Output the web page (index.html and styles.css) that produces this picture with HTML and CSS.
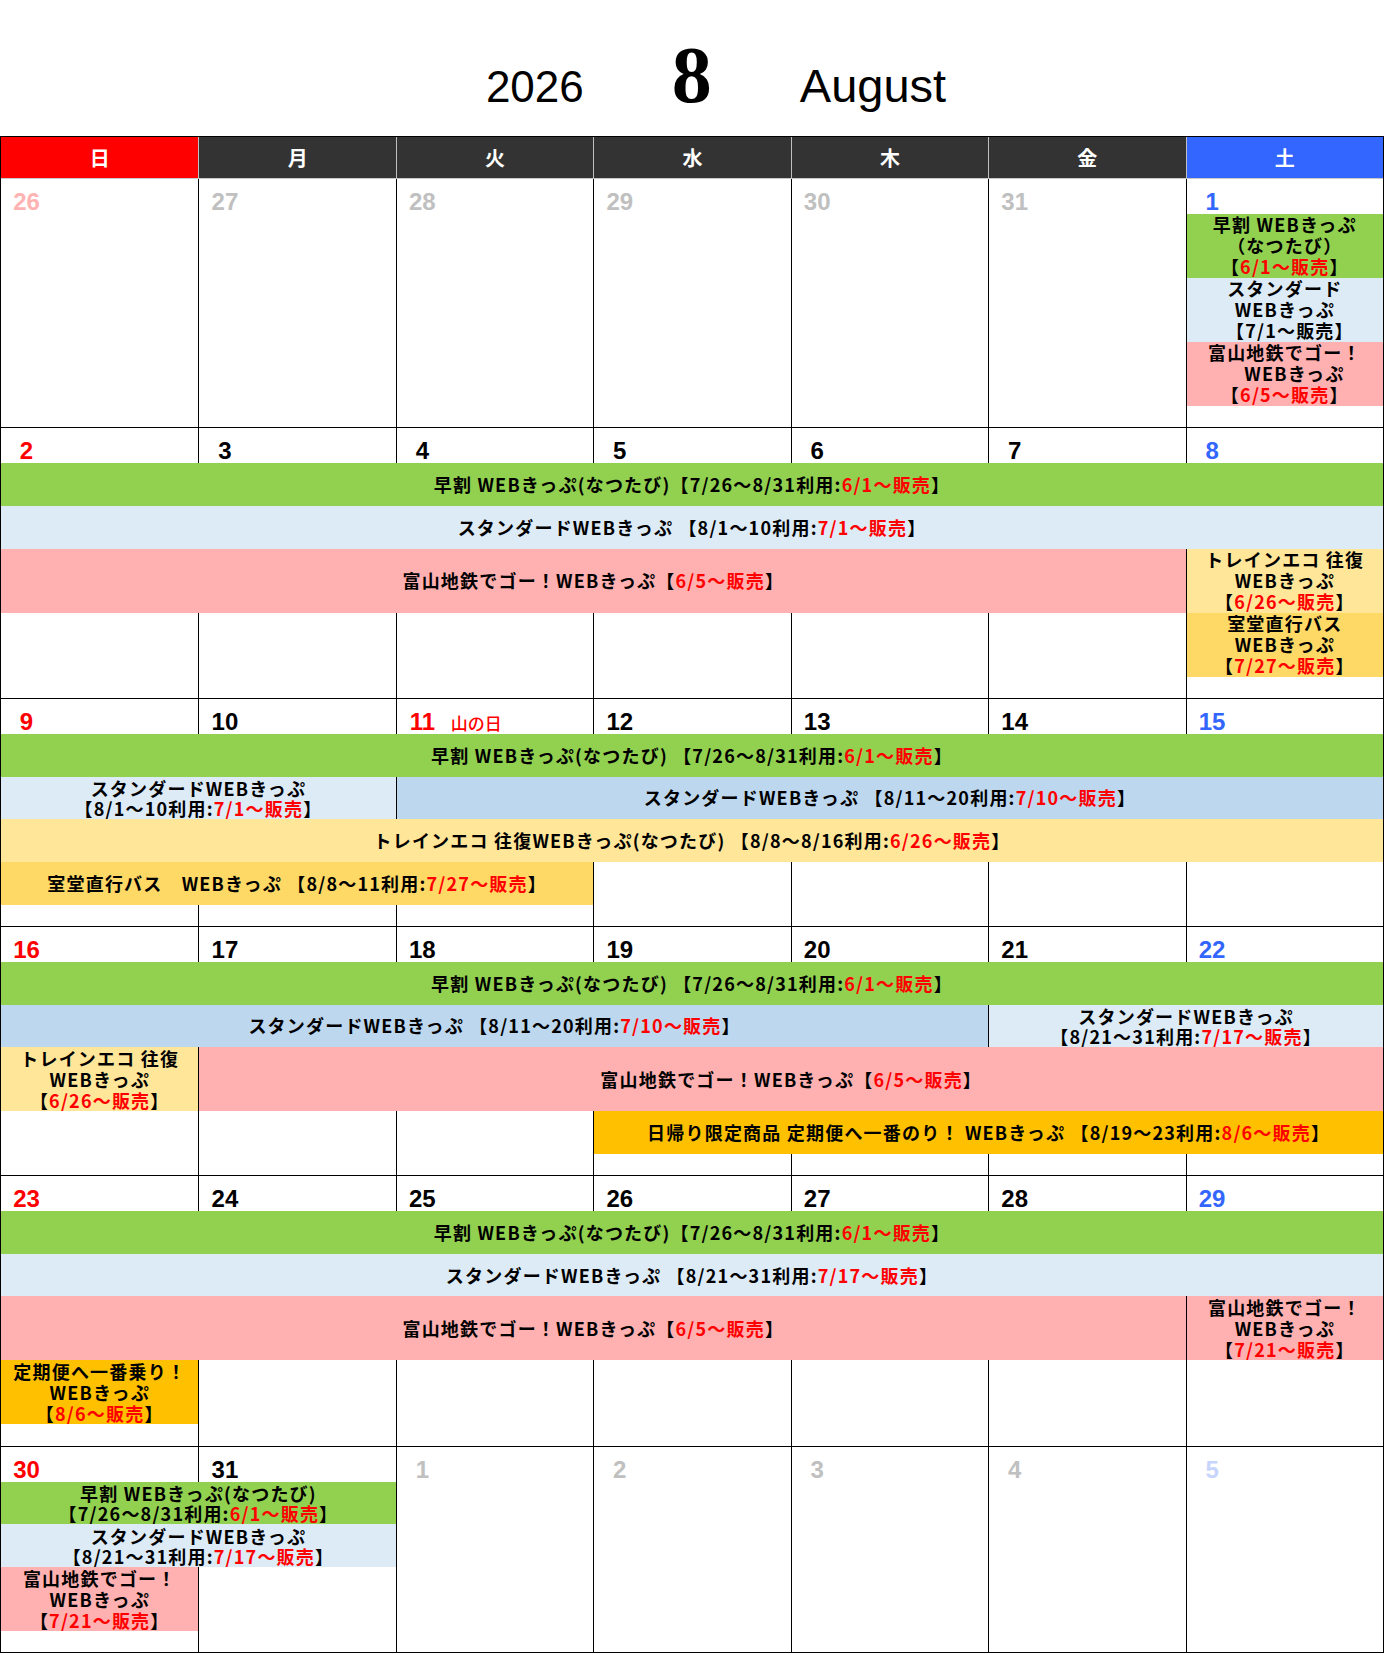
FILE: index.html
```html
<!DOCTYPE html>
<html lang="ja">
<head>
<meta charset="utf-8">
<title>2026年8月 カレンダー</title>
<link rel="stylesheet" href="styles.css">
</head>
<body>
<header class="title">
  <span class="year">2026</span>
  <span class="month">8</span>
  <span class="month-en">August</span>
</header>

<div class="cal">
  <div class="head">
    <div class="hd sun">日</div>
    <div class="hd">月</div>
    <div class="hd">火</div>
    <div class="hd">水</div>
    <div class="hd">木</div>
    <div class="hd">金</div>
    <div class="hd sat">土</div>
  </div>

  <!-- week 1 -->
  <div class="week u10">
    <div class="day c1"><span class="num prev-sun">26</span></div>
    <div class="day c2"><span class="num other">27</span></div>
    <div class="day c3"><span class="num other">28</span></div>
    <div class="day c4"><span class="num other">29</span></div>
    <div class="day c5"><span class="num other">30</span></div>
    <div class="day c6"><span class="num other">31</span></div>
    <div class="day c7"><span class="num sat-c">1</span></div>
    <div class="ev green c7 s1 r2 h3 bl"><span class="txt">早割 WEBきっぷ<br>（なつたび）<br>【<span class="red">6/1～販売</span>】</span></div>
    <div class="ev lblue c7 s1 r5 h3 bl"><span class="txt">スタンダード<br>WEBきっぷ　<br>　【7/1～販売】</span></div>
    <div class="ev pink c7 s1 r8 h3 bl"><span class="txt">富山地鉄でゴー！<br>　WEBきっぷ<br>【<span class="red">6/5～販売</span>】</span></div>
  </div>

  <!-- week 2 -->
  <div class="week u11">
    <div class="day c1"><span class="num sun-c">2</span></div>
    <div class="day c2"><span class="num">3</span></div>
    <div class="day c3"><span class="num">4</span></div>
    <div class="day c4"><span class="num">5</span></div>
    <div class="day c5"><span class="num">6</span></div>
    <div class="day c6"><span class="num">7</span></div>
    <div class="day c7"><span class="num sat-c">8</span></div>
    <div class="ev green c1 s7 r2 h2"><span class="txt">早割 WEBきっぷ(なつたび)【7/26～8/31利用:<span class="red">6/1～販売</span>】</span></div>
    <div class="ev lblue c1 s7 r4 h2"><span class="txt">スタンダードWEBきっぷ 【8/1～10利用:<span class="red">7/1～販売</span>】</span></div>
    <div class="ev pink c1 s6 r6 h3"><span class="txt">富山地鉄でゴー！WEBきっぷ【<span class="red">6/5～販売</span>】</span></div>
    <div class="ev lyellow c7 s1 r6 h3 bl"><span class="txt">トレインエコ 往復<br>WEBきっぷ<br>【<span class="red">6/26～販売</span>】</span></div>
    <div class="ev orange c7 s1 r9 h3 bl"><span class="txt">室堂直行バス<br>WEBきっぷ<br>【<span class="red">7/27～販売</span>】</span></div>
  </div>

  <!-- week 3 -->
  <div class="week u9">
    <div class="day c1"><span class="num sun-c">9</span></div>
    <div class="day c2"><span class="num">10</span></div>
    <div class="day c3"><span class="num sun-c">11</span><span class="holiday">山の日</span></div>
    <div class="day c4"><span class="num">12</span></div>
    <div class="day c5"><span class="num">13</span></div>
    <div class="day c6"><span class="num">14</span></div>
    <div class="day c7"><span class="num sat-c">15</span></div>
    <div class="ev green c1 s7 r2 h2"><span class="txt">早割 WEBきっぷ(なつたび) 【7/26～8/31利用:<span class="red">6/1～販売</span>】</span></div>
    <div class="ev lblue c1 s2 r4 h2 two"><span class="txt">スタンダードWEBきっぷ<br>【8/1～10利用:<span class="red">7/1～販売</span>】</span></div>
    <div class="ev mblue c3 s5 r4 h2 bl"><span class="txt">スタンダードWEBきっぷ 【8/11～20利用:<span class="red">7/10～販売</span>】</span></div>
    <div class="ev lyellow c1 s7 r6 h2"><span class="txt">トレインエコ 往復WEBきっぷ(なつたび) 【8/8～8/16利用:<span class="red">6/26～販売</span>】</span></div>
    <div class="ev orange c1 s3 r8 h2"><span class="txt">室堂直行バス　WEBきっぷ 【8/8～11利用:<span class="red">7/27～販売</span>】</span></div>
  </div>

  <!-- week 4 -->
  <div class="week u10">
    <div class="day c1"><span class="num sun-c">16</span></div>
    <div class="day c2"><span class="num">17</span></div>
    <div class="day c3"><span class="num">18</span></div>
    <div class="day c4"><span class="num">19</span></div>
    <div class="day c5"><span class="num">20</span></div>
    <div class="day c6"><span class="num">21</span></div>
    <div class="day c7"><span class="num sat-c">22</span></div>
    <div class="ev green c1 s7 r2 h2"><span class="txt">早割 WEBきっぷ(なつたび) 【7/26～8/31利用:<span class="red">6/1～販売</span>】</span></div>
    <div class="ev mblue c1 s5 r4 h2"><span class="txt">スタンダードWEBきっぷ 【8/11～20利用:<span class="red">7/10～販売</span>】</span></div>
    <div class="ev lblue c6 s2 r4 h2 bl two"><span class="txt">スタンダードWEBきっぷ<br>【8/21～31利用:<span class="red">7/17～販売</span>】</span></div>
    <div class="ev lyellow c1 s1 r6 h3"><span class="txt">トレインエコ 往復<br>WEBきっぷ<br>【<span class="red">6/26～販売</span>】</span></div>
    <div class="ev pink c2 s6 r6 h3 bl"><span class="txt">富山地鉄でゴー！WEBきっぷ【<span class="red">6/5～販売</span>】</span></div>
    <div class="ev gold c4 s4 r9 h2 bl"><span class="txt">日帰り限定商品 定期便へ一番のり！ WEBきっぷ 【8/19～23利用:<span class="red">8/6～販売</span>】</span></div>
  </div>

  <!-- week 5 -->
  <div class="week u11">
    <div class="day c1"><span class="num sun-c">23</span></div>
    <div class="day c2"><span class="num">24</span></div>
    <div class="day c3"><span class="num">25</span></div>
    <div class="day c4"><span class="num">26</span></div>
    <div class="day c5"><span class="num">27</span></div>
    <div class="day c6"><span class="num">28</span></div>
    <div class="day c7"><span class="num sat-c">29</span></div>
    <div class="ev green c1 s7 r2 h2"><span class="txt">早割 WEBきっぷ(なつたび)【7/26～8/31利用:<span class="red">6/1～販売</span>】</span></div>
    <div class="ev lblue c1 s7 r4 h2"><span class="txt">スタンダードWEBきっぷ 【8/21～31利用:<span class="red">7/17～販売</span>】</span></div>
    <div class="ev pink c1 s6 r6 h3"><span class="txt">富山地鉄でゴー！WEBきっぷ【<span class="red">6/5～販売</span>】</span></div>
    <div class="ev pink c7 s1 r6 h3 bl"><span class="txt">富山地鉄でゴー！<br>WEBきっぷ<br>【<span class="red">7/21～販売</span>】</span></div>
    <div class="ev gold c1 s1 r9 h3"><span class="txt">定期便へ一番乗り！<br>WEBきっぷ<br>【<span class="red">8/6～販売</span>】</span></div>
  </div>

  <!-- week 6 -->
  <div class="week u8">
    <div class="day c1"><span class="num sun-c">30</span></div>
    <div class="day c2"><span class="num">31</span></div>
    <div class="day c3"><span class="num other">1</span></div>
    <div class="day c4"><span class="num other">2</span></div>
    <div class="day c5"><span class="num other">3</span></div>
    <div class="day c6"><span class="num other">4</span></div>
    <div class="day c7"><span class="num next-sat">5</span></div>
    <div class="ev green c1 s2 r2 h2 two"><span class="txt">早割 WEBきっぷ(なつたび)<br>【7/26～8/31利用:<span class="red">6/1～販売</span>】</span></div>
    <div class="ev lblue c1 s2 r4 h2 two"><span class="txt">スタンダードWEBきっぷ<br>【8/21～31利用:<span class="red">7/17～販売</span>】</span></div>
    <div class="ev pink c1 s1 r6 h3"><span class="txt">富山地鉄でゴー！<br>WEBきっぷ<br>【<span class="red">7/21～販売</span>】</span></div>
  </div>
</div>
</body>
</html>
```

FILE: styles.css
```css
html, body {
  margin: 0;
  padding: 0;
  background: #fff;
}

body {
  width: 1384px;
  font-family: "Noto Sans CJK JP", "Noto Sans", sans-serif;
  color: #000;
}

/* ---------- title ---------- */
.title {
  box-sizing: border-box;
  height: 136px;
  padding: 35px 0 0 48px;
  display: flex;
  justify-content: center;
  align-items: baseline;
  gap: 88px;
}

.year,
.month-en {
  font-family: "Liberation Sans", Arial, sans-serif;
  font-size: 44px;
  line-height: 1;
}

.month-en {
  font-size: 47px;
}

.month {
  font-family: "Liberation Serif", "Times New Roman", serif;
  font-weight: 700;
  font-size: 80px;
  line-height: 1;
}

/* ---------- calendar frame ---------- */
.cal {
  width: 1384px;
  box-sizing: border-box;
  border-left: 1px solid #000;
  border-right: 1px solid #000;
}

.head {
  display: grid;
  grid-template-columns: repeat(7, 1fr);
  border-top: 1px solid #000;
  border-bottom: 1px solid #c8c8c8;
}

.hd {
  height: 41px;
  line-height: 41px;
  text-align: center;
  font-size: 20px;
  font-weight: 700;
  color: #fff;
  background: #333333;
}

.hd + .hd {
  border-left: 1px solid #c0c0c0;
}

.hd.sun {
  background: #ff0000;
}

.hd.sat {
  background: #3366ff;
}

/* ---------- weeks ---------- */
.week {
  display: grid;
  grid-template-columns: repeat(7, 1fr);
  border-bottom: 1px solid #000;
}

.u8  { grid-template-rows: 35px repeat(8, 21.33px); }
.u9  { grid-template-rows: 35px repeat(9, 21.33px); }
.u10 { grid-template-rows: 35px repeat(10, 21.33px); }
.u11 { grid-template-rows: 35px repeat(11, 21.33px); }

.day {
  grid-row: 1 / -1;
  padding-top: 11px;
  line-height: 24px;
  white-space: nowrap;
}

.day + .day {
  border-left: 1px solid #000;
}

.num {
  display: inline-block;
  min-width: 29px;
  margin-left: 11px;
  text-align: center;
  font-family: "Liberation Sans", Arial, sans-serif;
  font-weight: 700;
  font-size: 24px;
  color: #000;
}

.num.sun-c { color: #ff0000; }
.num.sat-c { color: #3366ff; }
.num.other { color: #c0c0c0; }
.num.prev-sun { color: #ffb3b3; }
.num.next-sat { color: #c6d5fb; }

.holiday {
  margin-left: 14px;
  font-size: 17px;
  font-weight: 500;
  color: #ff0000;
}

/* ---------- grid placement ---------- */
.c1 { grid-column-start: 1; }
.c2 { grid-column-start: 2; }
.c3 { grid-column-start: 3; }
.c4 { grid-column-start: 4; }
.c5 { grid-column-start: 5; }
.c6 { grid-column-start: 6; }
.c7 { grid-column-start: 7; }

.s1 { grid-column-end: span 1; }
.s2 { grid-column-end: span 2; }
.s3 { grid-column-end: span 3; }
.s4 { grid-column-end: span 4; }
.s5 { grid-column-end: span 5; }
.s6 { grid-column-end: span 6; }
.s7 { grid-column-end: span 7; }

.r2 { grid-row-start: 2; }
.r4 { grid-row-start: 4; }
.r5 { grid-row-start: 5; }
.r6 { grid-row-start: 6; }
.r8 { grid-row-start: 8; }
.r9 { grid-row-start: 9; }

.h2 { grid-row-end: span 2; }
.h3 { grid-row-end: span 3; }

/* ---------- events ---------- */
.ev {
  display: flex;
  align-items: center;
  justify-content: center;
  min-width: 0;
  text-align: center;
  font-size: 18px;
  font-weight: 700;
  letter-spacing: 1.2px;
  line-height: 21px;
  white-space: nowrap;
}

.ev.two {
  line-height: 20px;
}

.ev.bl {
  border-left: 1px solid #000;
}

.txt {
  display: block;
}

.red {
  color: #ff0000;
}

.green   { background: #92d050; }
.lblue   { background: #ddebf7; }
.mblue   { background: #bdd7ee; }
.pink    { background: #ffb0b0; }
.lyellow { background: #ffe699; }
.orange  { background: #ffd966; }
.gold    { background: #ffc000; }
```
